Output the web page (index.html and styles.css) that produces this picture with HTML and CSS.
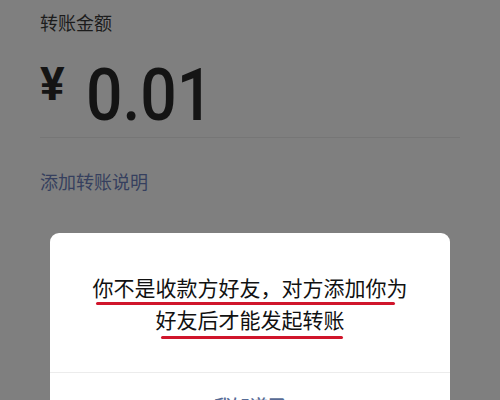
FILE: index.html
```html
<!DOCTYPE html>
<html lang="zh-CN">
<head>
  <meta charset="UTF-8" />
  <title>转账</title>
  <meta name="viewport" content="width=device-width, initial-scale=1.0" />
  <link rel="stylesheet" href="styles.css">
</head>
<body>
  <div class="page">
    <div class="label">转账金额</div>
    <div class="amount">
      <span class="currency">¥</span>
      <span class="value">0.01</span>
    </div>
    <div class="divider"></div>
    <div class="note">添加转账说明</div>
  </div>

  <div class="dialog">
    <p class="message">
      <span class="mark mark-1">你不是收款方好友，对方添加你为</span><br>
      <span class="mark mark-2">好友后才能发起转账</span>
    </p>
    <div class="dialog-btn">我知道了</div>
  </div>
</body>
</html>
```

FILE: styles.css
```css
html, body {
  height: 100%;
}
body {
  margin: 0;
  background: #7f7f7f;
  font-family: "Noto Sans CJK SC", "Noto Sans", sans-serif;
  color: #141414;
  overflow: hidden;
}
.page {
  padding: 10px 40px 0;
}
.label {
  font-size: 18px;
  line-height: 24px;
  color: #1c1c1c;
}
.amount {
  display: flex;
  align-items: flex-start;
  margin-top: 21px;
  height: 80px;
}
.currency {
  font-family: Roboto, sans-serif;
  font-weight: 700;
  font-size: 46px;
  line-height: 45px;
  margin-top: 7px;
  margin-right: 21px;
}
.value {
  display: inline-block;
  font-family: Roboto, sans-serif;
  font-weight: 500;
  font-size: 73px;
  line-height: 80px;
  transform: scaleX(0.88);
  transform-origin: left center;
}
.divider {
  height: 1px;
  background: #767676;
  margin-top: 2px;
}
.note {
  margin-top: 31px;
  font-size: 18px;
  line-height: 24px;
  color: #363f5e;
}
.dialog {
  width: 400px;
  margin: 40px auto 0;
  background: #fff;
  border-radius: 9px;
}
.message {
  margin: 0;
  padding: 38px 40px 37px;
  font-size: 21px;
  line-height: 32px;
  text-align: center;
  color: #111;
}
.mark {
  position: relative;
  display: inline-block;
}
.mark::after {
  content: "";
  position: absolute;
  height: 3px;
  border-radius: 2px;
  background: #d0152b;
}
.mark-1::after {
  left: 3px;
  right: 13px;
  bottom: -2px;
}
.mark-2::after {
  left: 5px;
  right: 2px;
  bottom: -4px;
}
.dialog-btn {
  border-top: 1px solid #ececec;
  padding: 20px 0 20px;
  font-size: 18px;
  line-height: 24px;
  font-weight: 500;
  text-align: center;
  color: #576b95;
}
```
